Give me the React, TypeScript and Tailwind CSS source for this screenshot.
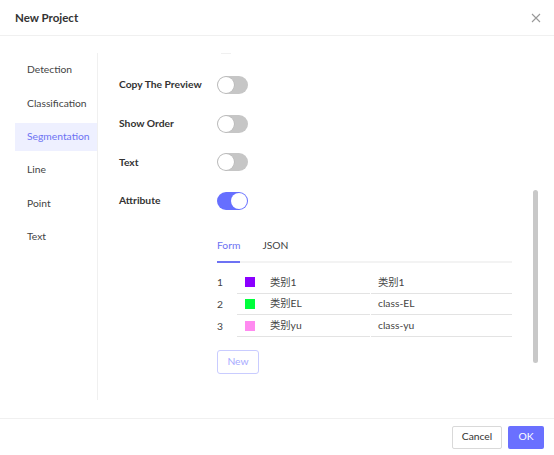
import React from "react";

function Toggle({ on }: { on?: boolean }) {
  return (
    <div
      className={
        "relative w-[31px] h-[18px] rounded-full " +
        (on ? "bg-[#666fff]" : "bg-[#c6c6c6]")
      }
    >
      <div
        className={
          "absolute top-[1px] w-[16px] h-[16px] rounded-full bg-white " +
          (on ? "right-[1px]" : "left-[1px] shadow-[0_0_0_0.5px_#b0b0b0]")
        }
      />
    </div>
  );
}

const sideItems = ["Detection", "Classification", "Segmentation", "Line", "Point", "Text"];

const rows = [
  { n: "1", color: "bg-[#8a00ff]", a: "类别1", b: "类别1" },
  { n: "2", color: "bg-[#00ff3c]", a: "类别EL", b: "class-EL" },
  { n: "3", color: "bg-[#ff8af0]", a: "类别yu", b: "class-yu" },
];

export default function App() {
  return (
    <div className="w-[554px] h-[455px] bg-white flex flex-col font-['Lato','Noto_Sans_CJK_SC',sans-serif] text-[#333]">
      {/* Header */}
      <div className="h-[36px] shrink-0 flex items-center justify-between pl-[15px] pr-[13px] border-b border-[#f0f0f0]">
        <span className="text-[11.5px] font-bold text-[#333]">New Project</span>
        <svg width="10" height="10" viewBox="0 0 10 10" className="text-[#999]">
          <path d="M1 1L9 9M9 1L1 9" stroke="currentColor" strokeWidth="1.1" />
        </svg>
      </div>

      {/* Body */}
      <div className="flex-1 flex pt-[17px] pb-[18px] min-h-0">
        <div className="ml-[15px] w-[83px] border-r border-[#f0f0f0] flex flex-col pt-[3px] gap-[5.4px]">
          {sideItems.map((s) => (
            <div
              key={s}
              className={
                "h-[28px] flex items-center pl-[12px] text-[10.3px] " +
                (s === "Segmentation" ? "bg-[#eef0ff] text-[#6d72f3]" : "text-[#444]")
              }
            >
              {s}
            </div>
          ))}
        </div>

        <div className="relative flex-1 pl-[21px] pr-[42px] overflow-hidden">
          <div className="h-[1px] w-[10px] ml-[102px] mt-[0px] bg-[#f0f0f0]" />
          <div className="flex flex-col gap-[20.7px] mt-[22px]">
            {["Copy The Preview", "Show Order", "Text", "Attribute"].map((l) => (
              <div key={l} className="h-[18px] flex items-center">
                <span className="w-[98px] text-[10.3px] font-bold text-[#333]">{l}</span>
                <Toggle on={l === "Attribute"} />
              </div>
            ))}
          </div>

          {/* Attribute panel */}
          <div className="ml-[98px] mt-[21px] w-[295px]">
            <div className="flex gap-[22px] border-b-2 border-[#f3f3f3] text-[10.3px]">
              <div className="relative pt-[6px] pb-[8px] leading-[16px] text-[#6d72f3]">
                Form
                <div className="absolute left-0 right-0 -bottom-[2px] h-[2px] bg-[#6d72f3]" />
              </div>
              <div className="pt-[6px] pb-[8px] leading-[16px] text-[#444]">JSON</div>
            </div>

            <div className="mt-[9px] flex flex-col">
              {rows.map((r) => (
                <div key={r.n} className="flex h-[21.7px] text-[10.3px] text-[#444]">
                  <div className="w-[20px] flex items-center">{r.n}</div>
                  <div className="w-[133px] flex items-center pl-[8px] border-b border-[#e3e3e3]">
                    <div className={"w-[10px] h-[10px] " + r.color} />
                    <span className="ml-[15px]">{r.a}</span>
                  </div>
                  <div className="w-[1px]" />
                  <div className="flex-1 flex items-center pl-[7px] border-b border-[#e3e3e3]">
                    {r.b}
                  </div>
                </div>
              ))}
            </div>

            <button className="mt-[13px] w-[42px] h-[24px] rounded-[3px] border border-[#c9ccff] text-[10.3px] text-[#a7aaff] bg-white flex items-center justify-center">
              New
            </button>
          </div>

          {/* scrollbar thumb */}
          <div className="absolute right-[16px] top-[137px] w-[5px] h-[173px] rounded-full bg-[#c8c8c8]" />
        </div>
      </div>

      {/* Footer */}
      <div className="h-[37px] shrink-0 border-t border-[#f0f0f0] flex items-center justify-end gap-[6px] pr-[10px]">
        <button className="w-[50px] h-[23px] rounded-[2px] border border-[#d9d9d9] bg-white text-[10.3px] text-[#333] flex items-center justify-center">
          Cancel
        </button>
        <button className="w-[36px] h-[23px] rounded-[2px] bg-[#6a70ff] text-[10.3px] text-white flex items-center justify-center">
          OK
        </button>
      </div>
    </div>
  );
}
